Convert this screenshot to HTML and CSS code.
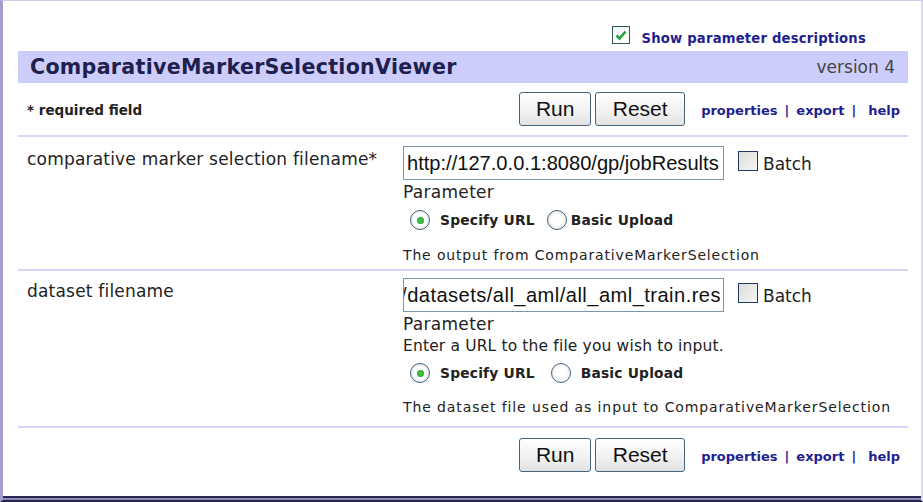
FILE: index.html
```html
<!DOCTYPE html>
<html>
<head>
<meta charset="utf-8">
<link rel="stylesheet" href="styles.css">
</head>
<body>
<div class="frame">
  <div class="content">
    <div class="showdesc">
      <span class="cb cb-on"><svg width="12" height="11" viewBox="0 0 12 11"><path d="M1.5 5.5 L4.5 8.5 L10.5 1.5" fill="none" stroke="#1fa83a" stroke-width="2.6"/></svg></span>
      <span class="showdesc-text">Show parameter descriptions</span>
    </div>
    <div class="titlebar">
      <span class="title">ComparativeMarkerSelectionViewer</span>
      <span class="version">version 4</span>
    </div>
    <div class="actions">
      <span class="req">* required field</span>
      <div class="btns">
        <button class="btn btn-run">Run</button>
        <button class="btn btn-reset">Reset</button>
        <span class="links"><a>properties</a><span class="sep">|</span><a>export</a><span class="sep sep2">|</span><a>help</a></span>
      </div>
    </div>
    <div class="param param1">
      <div class="plabel">comparative marker selection filename*</div>
      <div class="pfield">
        <div class="inrow">
          <div class="textbox"><span>http://127.0.0.1:8080/gp/jobResults</span></div>
          <span class="cb cb-batch"></span><span class="batch">Batch</span>
        </div>
        <div class="ptext">Parameter</div>
        <div class="radios">
          <span class="radio on"></span><span class="rlabel">Specify URL</span>
          <span class="radio r2"></span><span class="rlabel">Basic Upload</span>
        </div>
        <div class="desc">The output from ComparativeMarkerSelection</div>
      </div>
    </div>
    <div class="param param2">
      <div class="plabel">dataset filename</div>
      <div class="pfield">
        <div class="inrow">
          <div class="textbox end"><span>http://127.0.0.1:8080/gp/datasets/all_aml/all_aml_train.res</span></div>
          <span class="cb cb-batch"></span><span class="batch">Batch</span>
        </div>
        <div class="ptext">Parameter</div>
        <div class="ptext enter">Enter a URL to the file you wish to input.</div>
        <div class="radios">
          <span class="radio on"></span><span class="rlabel">Specify URL</span>
          <span class="radio r2b"></span><span class="rlabel">Basic Upload</span>
        </div>
        <div class="desc desc2">The dataset file used as input to ComparativeMarkerSelection</div>
      </div>
    </div>
    <div class="actions bottom">
      <span class="req"></span>
      <div class="btns">
        <button class="btn btn-run">Run</button>
        <button class="btn btn-reset">Reset</button>
        <span class="links"><a>properties</a><span class="sep">|</span><a>export</a><span class="sep sep2">|</span><a>help</a></span>
      </div>
    </div>
  </div>
</div>
</body>
</html>
```

FILE: styles.css
```css
* { box-sizing: border-box; }
html, body { margin: 0; padding: 0; background: #fff; }
body { width: 923px; height: 502px; overflow: hidden; font-family: "DejaVu Sans", Verdana, sans-serif; color: #1e1e1e; }

.frame {
  width: 923px;
  height: 502px;
  border-left: 3px solid #a29ece;
  border-top: 1px solid #cfcdec;
  border-right: 2px solid #dcdcf0;
  border-bottom: 2px solid #26264a;
  box-shadow: inset 0 -2px 0 #8e8cbc, inset 0 -4px 0 #2a2a50;
}

.content {
  margin-left: 15px;
  width: 890px;
}

.showdesc {
  height: 50px;
  display: flex;
  align-items: flex-end;
  justify-content: flex-end;
  padding-right: 42px;
  padding-bottom: 5px;
}
.cb {
  display: inline-flex;
  align-items: center;
  justify-content: center;
  width: 18px;
  height: 18px;
}
.cb-on {
  border: 1px solid #2e5a5a;
  background: linear-gradient(#f4f4f4, #ffffff);
  margin-right: 11px;
  margin-bottom: 2px;
}
.showdesc-text {
  font-size: 13.2px;
  font-weight: bold;
  color: #1f1f8f;
  letter-spacing: 0.2px;
}

.titlebar {
  height: 32px;
  background: #cdcdfb;
  display: flex;
  align-items: center;
  justify-content: space-between;
  padding: 0 13px 0 12px;
}
.title {
  font-size: 20.6px;
  font-weight: bold;
  color: #20204e;
  letter-spacing: 0.3px;
}
.version {
  font-size: 17px;
  color: #444;
}

.actions {
  height: 54px;
  display: flex;
  align-items: center;
  justify-content: space-between;
  border-bottom: 2px solid #d6d6f4;
  padding-left: 9px;
  padding-right: 8px;
}
.actions.bottom { border-bottom: none; }
.req {
  font-size: 13.5px;
  font-weight: bold;
  color: #222;
  padding-top: 2px;
}
.btns { display: flex; align-items: center; }
.btn {
  height: 34px;
  border: 1px solid #45627e;
  border-radius: 3px;
  background: linear-gradient(#ffffff, #f0f0f0 60%, #e2e2e2);
  font-family: "Liberation Sans", Arial, sans-serif;
  font-size: 21px;
  color: #111;
  padding: 0;
  margin: 0;
}
.btn-run { width: 72px; margin-right: 4px; }
.btn-reset { width: 90px; }
.links {
  margin-left: 16px;
  font-size: 13px;
  font-weight: bold;
  color: #1f1f8f;
  display: flex;
  align-items: center;
  padding-top: 3px;
}
.links a { color: #1f1f8f; }
.sep { margin: 0 7px; }
.sep2 { margin-right: 12px; margin-left: 7px; }

.param {
  display: flex;
  border-bottom: 2px solid #d6d6f4;
  padding-top: 9px;
}
.param1 { height: 134px; }
.param2 { height: 157px; padding-top: 7px; }
.plabel {
  width: 385px;
  padding-left: 9px;
  padding-top: 3px;
  font-size: 17px;
  color: #222;
  letter-spacing: 0.2px;
}
.pfield { flex: 1; }
.inrow { display: flex; align-items: center; height: 34px; }
.textbox {
  width: 321px;
  height: 34px;
  border: 1px solid #7a94ac;
  display: flex;
  align-items: center;
  overflow: hidden;
  white-space: nowrap;
  padding: 0 3px;
  font-family: "Liberation Sans", Arial, sans-serif;
  font-size: 20.1px;
  color: #111;
}
.textbox.end { justify-content: flex-end; letter-spacing: 0.46px; padding-right: 2px; }
.textbox span { flex: none; }
.cb-batch {
  width: 20px;
  height: 20px;
  margin-left: 14px;
  margin-right: 5px;
  margin-top: -4px;
  border: 1px solid #1f3a6a;
  background: linear-gradient(135deg, #dcdcd8, #f6f6f4);
}
.batch { font-size: 17px; color: #222; padding-top: 2px; }
.ptext { font-size: 17px; color: #222; line-height: 22px; letter-spacing: 0.3px; margin-top: 1px; }
.ptext.enter { font-size: 15.5px; letter-spacing: 0.15px; margin-top: 0; }
.radios {
  display: flex;
  align-items: center;
  height: 26px;
  padding-left: 7px;
  margin-top: 4px;
}
.param2 .radios { margin-top: 3px; }
.radio {
  width: 20px;
  height: 20px;
  border-radius: 50%;
  border: 1px solid #3f6584;
  background: radial-gradient(circle, #ffffff 40%, #dcdcdc);
  display: inline-flex;
  align-items: center;
  justify-content: center;
  margin-right: 10px;
  flex: none;
}
.radio.on::after {
  content: "";
  width: 7px;
  height: 7px;
  border-radius: 50%;
  background: radial-gradient(circle, #48d048, #1f9a2a);
}
.radio.r2 { margin-left: 12px; margin-right: 4px; }
.radio.r2b { margin-left: 16px; margin-right: 10px; }
.rlabel { font-size: 13.8px; font-weight: bold; color: #222; letter-spacing: 0.2px; }
.desc { font-size: 14px; color: #222; margin-top: 13px; letter-spacing: 0.85px; line-height: 18px; }
.desc2 { margin-top: 12px; letter-spacing: 0.9px; }
```
